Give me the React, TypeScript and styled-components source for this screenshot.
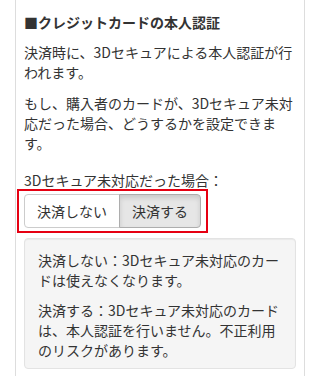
import React from "react";
import styled, { createGlobalStyle } from "styled-components";

const GlobalStyle = createGlobalStyle`
  html, body {
    margin: 0;
    padding: 0;
    background: #fff;
  }

  body {
    font-family: "Noto Sans CJK JP", "Noto Sans", sans-serif;
    font-size: 14px;
    line-height: 20px;
    color: #333;
  }
`;

type ChoiceProps = { $active?: boolean; $last?: boolean };

function App() {
  return (
    <>
      <GlobalStyle />
      <Panel>
        <Title>■クレジットカードの本人認証</Title>
        <Text>決済時に、3Dセキュアによる本人認証が行われます。</Text>
        <Text>
          もし、購入者のカードが、3Dセキュア未対応だった場合、どうするかを設定できます。
        </Text>

        <FieldLabel>3Dセキュア未対応だった場合：</FieldLabel>
        <Highlight>
          <ButtonGroup>
            <Choice type='button'>決済しない</Choice>
            <Choice type='button' $active $last>
              決済する
            </Choice>
          </ButtonGroup>
        </Highlight>

        <Well>
          <WellText>決済しない：3Dセキュア未対応のカードは使えなくなります。</WellText>
          <WellText>
            決済する：3Dセキュア未対応のカードは、本人認証を行いません。不正利用のリスクがあります。
          </WellText>
        </Well>
      </Panel>
    </>
  );
}

export default App;

const Panel = styled.div`
  box-sizing: border-box;
  width: 290px;
  min-height: 376px;
  margin-left: 15px;
  padding: 12px 8px 0;
  border-left: 1px solid #ddd;
  border-right: 1px solid #ddd;
`;

const Title = styled.h4`
  margin: 0 0 10px;
  font-size: 14px;
  line-height: 20px;
  font-weight: bold;
  color: #333;
`;

const Text = styled.p`
  margin: 0 0 11px;
  line-break: strict;
`;

const FieldLabel = styled.label`
  display: block;
  margin-top: 17px;
`;

const Highlight = styled.div`
  display: flex;
  width: fit-content;
  margin: -1px 0 5px -7px;
  padding: 3px 5px;
  border: 2px solid #e60012;
`;

const ButtonGroup = styled.div`
  display: flex;
`;

const Choice = styled.button<ChoiceProps>`
  box-sizing: border-box;
  height: 34px;
  padding: 6px 12px;
  margin-left: ${(p) => (p.$last ? "-1px" : "0")};
  font-family: inherit;
  font-size: 14px;
  line-height: 20px;
  color: #333;
  background: ${(p) => (p.$active ? "#e6e6e6" : "#fff")};
  border: 1px solid ${(p) => (p.$active ? "#adadad" : "#ccc")};
  border-radius: ${(p) => (p.$last ? "0 4px 4px 0" : "4px 0 0 4px")};
  box-shadow: ${(p) =>
    p.$active ? "inset 0 3px 5px rgba(0, 0, 0, 0.125)" : "none"};
  cursor: pointer;
`;

const Well = styled.div`
  box-sizing: border-box;
  padding: 11px 13px 8px;
  background: #f5f5f5;
  border: 1px solid #e3e3e3;
  border-radius: 4px;
  box-shadow: inset 0 1px 1px rgba(0, 0, 0, 0.05);
`;

const WellText = styled.p`
  margin: 0 0 10px;
  line-break: strict;

  &:last-child {
    margin-bottom: 0;
  }
`;
